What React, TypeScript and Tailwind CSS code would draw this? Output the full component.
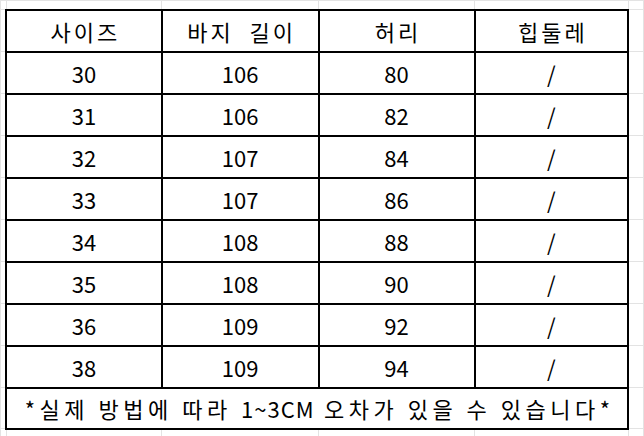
import React from 'react';

const rows = [
  ['30', '106', '80', '/'],
  ['31', '106', '82', '/'],
  ['32', '107', '84', '/'],
  ['33', '107', '86', '/'],
  ['34', '108', '88', '/'],
  ['35', '108', '90', '/'],
  ['36', '109', '92', '/'],
  ['38', '109', '94', '/'],
];

const headers = ['사이즈', '바지  길이', '허리', '힙둘레'];

// faint spreadsheet gridline cell, used around the table
const faint = 'border border-[#e3e3e3] p-0';
const cell = 'border-2 border-black p-0 text-center align-middle';

export default function App() {
  return (
    <div
      className="w-[644px] h-[436px] overflow-hidden bg-white text-black text-[22px] leading-none"
      style={{ fontFamily: '"Noto Sans CJK KR", "Noto Sans", sans-serif' }}
    >
      <table className="table-fixed border-collapse">
        <colgroup>
          <col className="w-[7px]" />
          <col className="w-[158px]" />
          <col className="w-[158px]" />
          <col className="w-[159px]" />
          <col className="w-[156px]" />
          <col className="w-[20px]" />
        </colgroup>
        <tbody>
          <tr className="h-[9px]">
            <td className={faint} />
            <td className={faint} />
            <td className={faint} />
            <td className={faint} />
            <td className={faint} />
            <td className={faint} />
          </tr>
          <tr className="h-[42px]">
            <td className={faint} />
            {headers.map((h) => (
              <td key={h} className={`${cell} tracking-[3px] whitespace-pre pl-[3px]`}>
                {h}
              </td>
            ))}
            <td className={faint} />
          </tr>
          {rows.map((r) => (
            <tr key={r[0]} className="h-[42px]">
              <td className={faint} />
              {r.map((v, i) => (
                <td key={i} className={cell}>
                  {v}
                </td>
              ))}
              <td className={faint} />
            </tr>
          ))}
          <tr className="h-[41px]">
            <td className={faint} />
            <td colSpan={4} className={`${cell} tracking-[4.5px] whitespace-pre pl-[5px]`}>
              *실제 방법에 따라 <span className="tracking-[1px]">1~3CM</span> 오차가 있을 수 있습니다*
            </td>
            <td className={faint} />
          </tr>
          <tr className="h-[20px]">
            <td className={faint} />
            <td className={faint} />
            <td className={faint} />
            <td className={faint} />
            <td className={faint} />
            <td className={faint} />
          </tr>
        </tbody>
      </table>
    </div>
  );
}
